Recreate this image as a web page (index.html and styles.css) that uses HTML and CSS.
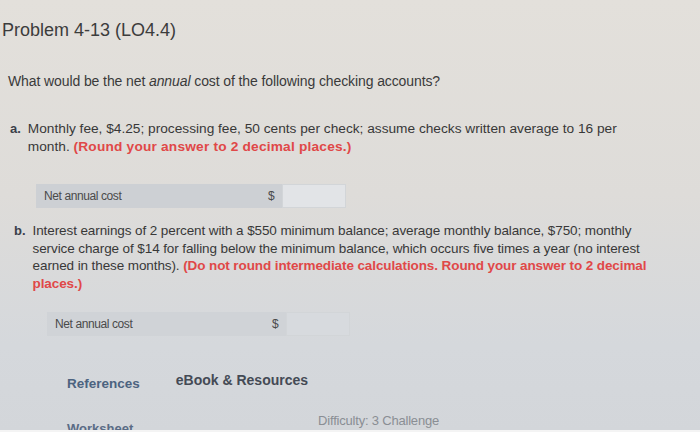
FILE: index.html
```html
<!DOCTYPE html>
<html>
<head>
<meta charset="utf-8">
<link rel="stylesheet" href="styles.css">
</head>
<body>
<div class="page">
  <h1 class="title">Problem 4-13 (LO4.4)</h1>
  <p class="question">What would be the net <i>annual</i> cost of the following checking accounts?</p>

  <div class="part part-a">
    <div class="part-head">
      <span class="letter">a.</span>
      <p class="part-text">Monthly fee, $4.25; processing fee, 50 cents per check; assume checks written average to 16 per<br>month. <span class="note">(Round your answer to 2 decimal places.)</span></p>
    </div>
    <div class="answer-row">
      <span class="answer-label">Net annual cost</span>
      <span class="dollar">$</span>
      <span class="answer-input"></span>
    </div>
  </div>

  <div class="part part-b">
    <div class="part-head">
      <span class="letter">b.</span>
      <p class="part-text">Interest earnings of 2 percent with a $550 minimum balance; average monthly balance, $750; monthly<br>service charge of $14 for falling below the minimum balance, which occurs five times a year (no interest<br>earned in these months). <span class="note">(Do not round intermediate calculations. Round your answer to 2 decimal<br>places.)</span></p>
    </div>
    <div class="answer-row">
      <span class="answer-label">Net annual cost</span>
      <span class="dollar">$</span>
      <span class="answer-input"></span>
    </div>
  </div>

  <div class="refs">
    <span class="ref-link">References</span>
    <span class="ref-ebook">eBook &amp; Resources</span>
  </div>

  <div class="footer">
    <span class="worksheet">Worksheet</span>
    <span class="difficulty">Difficulty: 3 Challenge</span>
  </div>
</div>
</body>
</html>
```

FILE: styles.css
```css
html, body {
  margin: 0;
  padding: 0;
}
body {
  width: 700px;
  height: 432px;
  overflow: hidden;
  position: relative;
  background: linear-gradient(180deg, #e3e0db 0%, #dedcd9 45%, #d5d8dc 80%, #d3d6da 100%);
  font-family: "Liberation Sans", Arial, sans-serif;
  color: #3a3a3a;
}
body::after {
  content: "";
  position: absolute;
  left: 0;
  right: 0;
  bottom: 0;
  height: 2px;
  background: #f4f4f4;
}
.page {
  padding: 20px 0 0 2px;
}
.title {
  margin: 0;
  font-size: 18px;
  font-weight: normal;
  color: #3c3c3c;
  line-height: 20px;
}
.question {
  margin: 33px 0 0 6px;
  font-size: 14px;
  line-height: 16px;
  color: #3a3a3a;
  letter-spacing: -0.1px;
}
.part {
  display: flex;
  flex-direction: column;
}
.part-a {
  margin: 31px 0 0 8px;
}
.part-b {
  margin: 14px 0 0 12px;
}
.part-head {
  display: flex;
  gap: 7px;
}
.letter {
  font-weight: bold;
  font-size: 13px;
  line-height: 17.5px;
  color: #3a3f4a;
}
.part-text {
  margin: 0;
  font-size: 13.5px;
  line-height: 17.5px;
  color: #383838;
  white-space: nowrap;
}
.part-a .part-text {
  font-size: 13.7px;
}
.part-a .note {
  letter-spacing: 0.2px;
}
.part-b .part-text {
  letter-spacing: -0.1px;
}
.note {
  color: #e04848;
  font-weight: bold;
}
.answer-row {
  display: flex;
  align-items: center;
  height: 24px;
  width: 310px;
  background: #cdd0d4;
  font-size: 12px;
  color: #4a4a4a;
  letter-spacing: -0.4px;
}
.part-a .answer-row {
  margin: 29px 0 0 26px;
}
.part-b .answer-row {
  margin: 20px 0 0 33px;
  width: 303px;
  background: #d0d3d7;
}
.answer-label {
  padding-left: 8px;
  flex: 1;
}
.dollar {
  width: 14px;
  font-size: 12px;
}
.answer-input {
  width: 62px;
  height: 22px;
  background: #e2e4e7;
  border: 1px solid #d2d5d8;
}
.part-b .answer-input {
  background: #d7dade;
}
.refs {
  display: flex;
  gap: 36px;
  margin: 36px 0 0 65px;
  font-size: 13.5px;
  font-weight: bold;
}
.ref-link {
  color: #4c6380;
  padding-top: 4px;
}
.ref-ebook {
  color: #444a55;
  font-size: 14px;
}
.footer {
  display: flex;
  justify-content: space-between;
  width: 380px;
  margin: 22px 0 0 65px;
  font-size: 13px;
}
.worksheet {
  font-weight: bold;
  color: #5a6c86;
  padding-top: 8px;
}
.difficulty {
  color: #8a8e94;
  letter-spacing: -0.2px;
  margin-right: 8px;
}
```
